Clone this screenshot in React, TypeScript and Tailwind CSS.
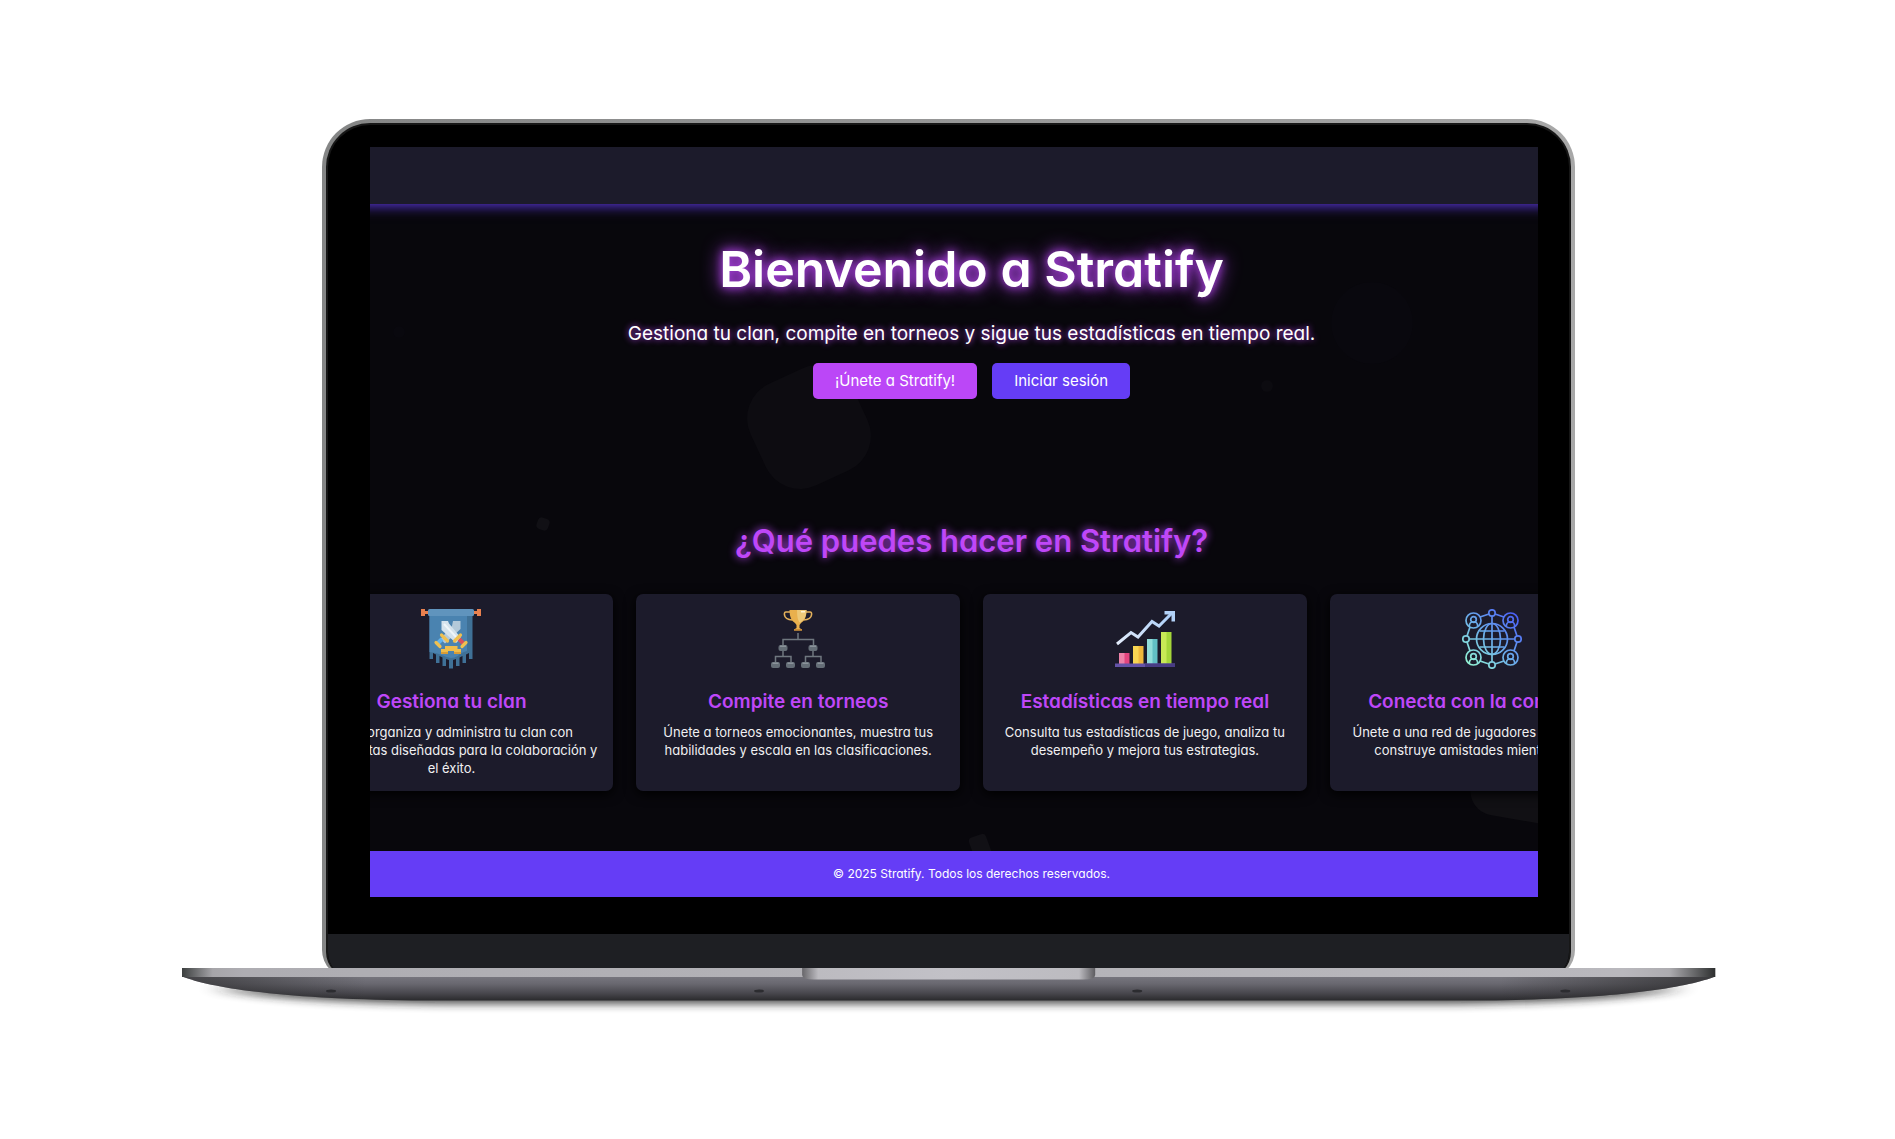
import type { ReactNode } from "react";

function BannerIcon() {
  return (
    <svg viewBox="0 0 60 60" className="size-[60px]" aria-hidden="true">
      <path d="M0 0h4v2h3v3H4v2H0zM60 0h-4v2h-3v3h3v2h4z" fill="#e8804e" />
      <path d="M8.500 6h43v44h-3.500v-6l-3 1.500v8.500h-3.500v-7l-3 1.500v8.500H35v-7l-3 1v8.500h-4V51l-3-1v7h-3.500v-8.500l-3-1.500v7H15v-8.500L12 44v6H8.500z" fill="#3f7197" />
      <path d="M8.500 6H46v36q-7 2-9 5-4 2-7 2-5-1-8-2.500-6-3-13.500-3.500z" fill="#4a83b0" />
      <rect x="7" y="0" width="46" height="7" rx="1.500" fill="#6094bd" />
      <path d="M39.500 12v8L24 34.500 19.500 30 31 17l1-5z" fill="#b3c9d9" />
      <path d="M20.500 12v9L35 34l5-5-12-14.500-1-2.500z" fill="#d5e3ed" />
      <path d="m23 15 13 14" stroke="#eff6fa" strokeWidth="2" />
      <path d="m21 30-5 5" stroke="#62b4ee" strokeWidth="4" />
      <path d="m38 30 5 5" stroke="#d9505c" strokeWidth="4" />
      <path d="m20.500 26 6 6M15 33.500l4 4M39.500 26l-6 6M45 33.500l-4 4" stroke="#efc050" strokeWidth="3.200" strokeLinecap="round" />
      <path d="M24 37h12.500v3H40v5h-7v-3h-6v3h-7v-5h4z" fill="#efbd4b" />
      <path d="M20 43h7v2h-7zM33 43h7v2h-7z" fill="#d89c36" />
    </svg>
  );
}

function TournamentIcon() {
  return (
    <svg viewBox="0 0 60 60" className="size-[60px]" aria-hidden="true">
      <path d="M22 3h-4q-2 0-1.500 3 .5 4.500 8 5M38 3h4q2 0 1.500 3-.5 4.500-8 5" fill="none" stroke="#e4b25c" strokeWidth="1.600" />
      <path d="M21.500 1h17q0 10-5.500 13l-1.500 2v3l2.500 1.500v1h-8v-1l2.500-1.500v-3L27 14q-5.500-3-5.500-13z" fill="#e9b04d" />
      <path d="M29 1h9.500q0 9-6 12.500Q29 13 29 1z" fill="#edc878" />
      <path d="M33 2h4v1.500h-4z" fill="#fff3d2" />
      <path d="M26 20h8v1.500h-8z" fill="#c98a35" />
      <path d="M30 24v6M15 37v-6.500h30.500V37M15 42v5M7.500 53v-5.500h15.500V53M45 42v5M37.500 53v-5.500h15.500V53" fill="none" stroke="#6f777f" strokeWidth="1.500" />
      <g fill="#656e77">
        <rect x="10.500" y="36" width="9" height="6" rx="2" />
        <rect x="40.500" y="36" width="9" height="6" rx="2" />
        <rect x="3" y="53" width="9" height="6" rx="2" />
        <rect x="18" y="53" width="9" height="6" rx="2" />
        <rect x="33" y="53" width="9" height="6" rx="2" />
        <rect x="48" y="53" width="9" height="6" rx="2" />
      </g>
      <path d="M12 37.200h6M42 37.200h6M4.500 54.200h6M19.500 54.200h6M34.500 54.200h6M49.500 54.200h6" stroke="#8a929a" strokeWidth="1.400" />
    </svg>
  );
}

function ChartIcon() {
  return (
    <svg viewBox="0 0 60 60" className="size-[60px]" aria-hidden="true">
      <defs>
        <linearGradient id="trend" x1="0" y1="1" x2="1" y2="0">
          <stop offset="0" stopColor="#e3ecfb" />
          <stop offset="1" stopColor="#a9cdf8" />
        </linearGradient>
      </defs>
      <path d="M4 44h6v11H4z" fill="#ee82a9" />
      <path d="M9.500 44h5v11h-5z" fill="#e4457f" />
      <path d="M18 37h6v18h-6z" fill="#f8d552" />
      <path d="M23.500 37h5v18h-5z" fill="#f0b83c" />
      <path d="M32 30h6v25h-6z" fill="#92ddda" />
      <path d="M37.500 30h5v25h-5z" fill="#62bfc5" />
      <path d="M46 23h6v32h-6z" fill="#c8e956" />
      <path d="M51.500 23h5v32h-5z" fill="#a5d63a" />
      <path d="M0 54.500h60V58H0z" fill="#6453a8" />
      <path d="M30 54.500h30V58H30z" fill="#483c84" />
      <path d="m2 35 14-11.500 7 4.500 14-15.500 7 4.500L57 4" fill="none" stroke="url(#trend)" strokeWidth="3" />
      <path d="M49.500 2H60v10.500h-3.500V5.500h-7z" fill="#b3d2f8" />
    </svg>
  );
}

function CommunityIcon() {
  return (
    <svg viewBox="0 0 60 60" className="size-[60px]" aria-hidden="true">
      <defs>
        <linearGradient id="net" gradientUnits="userSpaceOnUse" x1="6" y1="54" x2="54" y2="6">
          <stop offset="0" stopColor="#92f2d4" />
          <stop offset="0.500" stopColor="#69a9ea" />
          <stop offset="1" stopColor="#4a5ff6" />
        </linearGradient>
      </defs>
      <g fill="none" stroke="url(#net)" strokeWidth="1.700">
        <circle cx="30" cy="30" r="15.500" />
        <ellipse cx="30" cy="30" rx="8.500" ry="15.500" />
        <path d="M30 7v46M7 30h46M17.500 22h25M17.500 38h25" />
        <circle cx="30" cy="4" r="3.200" />
        <circle cx="30" cy="56" r="3.200" />
        <circle cx="4" cy="30" r="3.200" />
        <circle cx="56" cy="30" r="3.200" />
        <path d="m18 8 9-3M33 5l9 3M18 52l9 3M33 55l9-3M8 18l-3 9M5 33l3 9M52 18l3 9M55 33l-3 9" />
        {[11.5, 48.5].map((x) =>
          [11.5, 48.5].map((y) => (
            <g key={`${x}-${y}`}>
              <circle cx={x} cy={y} r="7.500" />
              <circle cx={x} cy={y - 1} r="2.800" />
              <path d={`M${x - 4.2} ${y + 6}q0-4 3-4.500h2.400q3 .5 3 4.500`} />
            </g>
          )),
        )}
      </g>
    </svg>
  );
}

const features: { title: string; text: string; icon: ReactNode }[] = [
  {
    title: "Gestiona tu clan",
    text: "Crea, organiza y administra tu clan con herramientas diseñadas para la colaboración y el éxito.",
    icon: <BannerIcon />,
  },
  {
    title: "Compite en torneos",
    text: "Únete a torneos emocionantes, muestra tus habilidades y escala en las clasificaciones.",
    icon: <TournamentIcon />,
  },
  {
    title: "Estadísticas en tiempo real",
    text: "Consulta tus estadísticas de juego, analiza tu desempeño y mejora tus estrategias.",
    icon: <ChartIcon />,
  },
  {
    title: "Conecta con la comunidad",
    text: "Únete a una red de jugadores apasionados y construye amistades mientras juegas.",
    icon: <CommunityIcon />,
  },
];

function FloatingShapes() {
  return (
    <div className="pointer-events-none absolute inset-0" aria-hidden="true">
      <div className="absolute top-[224px] left-[32.800%] size-28 -rotate-25 rounded-[38px] bg-[#0d0c11]" />
      <div className="absolute top-[135px] left-[82.300%] size-[82px] rounded-full bg-[#09080e]" />
      <div className="absolute top-[233px] left-[76.300%] size-3 rounded-full bg-[#0c0b10]" />
      <div className="absolute top-[371px] left-[14.300%] size-3 rotate-20 rounded bg-[#111015]" />
      <div className="absolute top-[179px] left-[2%] size-3 rounded-full bg-[#09080e]" />
      <div className="absolute top-[546px] left-[94.800%] size-[130px] rotate-10 rounded-3xl bg-[#111014]" />
      <div className="absolute top-[688px] left-[51.500%] h-7 w-[18px] -rotate-20 rounded-sm bg-[#111015]" />
    </div>
  );
}

function Website() {
  return (
    <div className="relative overflow-hidden bg-[#08070c] text-center text-white">
      <FloatingShapes />
      <header className="relative -mx-5 h-[57px] bg-[#1c1b2b] shadow-[0_2px_12px_#5a38d8]" />
      <div className="relative ml-[-8.500%] w-[120%]">
        <main className="px-[19px] pt-[35px] pb-[60px]">
          <section className="flex flex-col items-center">
            <h1 className="text-[50px] leading-[60px] font-semibold [text-shadow:0_0_10px_#bb47f7,0_0_20px_#bb47f7]">
              Bienvenido a Stratify
            </h1>
            <p className="mt-[21px] text-[19px] leading-7 [text-shadow:0_0_6px_#bb47f7]">
              Gestiona tu clan, compite en torneos y sigue tus estadísticas en tiempo real.
            </p>
            <div className="mt-[15px] flex gap-[15px]">
              <button className="h-9 rounded-[5px] bg-[#bb47f7] px-[22px] text-[15px]">¡Únete a Stratify!</button>
              <button className="h-9 rounded-[5px] bg-[#653df6] px-[22px] text-[15px]">Iniciar sesión</button>
            </div>
          </section>
          <section className="mt-[122px]">
            <h2 className="text-[31px] leading-10 font-semibold text-[#bf47f8] [text-shadow:0_0_8px_#bb47f7]">
              ¿Qué puedes hacer en Stratify?
            </h2>
            <div className="mt-[33px] grid grid-cols-4 gap-[23px]">
              {features.map((feature) => (
                <article
                  key={feature.title}
                  className="flex flex-col items-center rounded-[7px] bg-[#1c1b2b] px-3 pt-[15px] pb-3.5 shadow-[0_3px_12px_#000000]"
                >
                  {feature.icon}
                  <h3 className="mt-5 text-[19px] leading-[26px] font-semibold whitespace-nowrap text-[#bf47f8]">
                    {feature.title}
                  </h3>
                  <p className="mt-2 text-[13px] leading-[18px] text-[#f0f0f2]">{feature.text}</p>
                </article>
              ))}
            </div>
          </section>
        </main>
        <footer className="bg-[#653df6] py-3.5 text-[12px] leading-[18px]">
          © 2025 Stratify. Todos los derechos reservados.
        </footer>
      </div>
    </div>
  );
}

function LaptopBase() {
  return (
    <svg
      viewBox="0 0 1533 50"
      preserveAspectRatio="none"
      className="relative -mt-2.5 h-[50px] w-[81%] overflow-visible"
      aria-hidden="true"
    >
      <defs>
        <linearGradient id="underside" x1="0" y1="0" x2="0" y2="1">
          <stop offset="0" stopColor="#77767e" />
          <stop offset="0.300" stopColor="#696870" />
          <stop offset="0.700" stopColor="#48474d" />
          <stop offset="1" stopColor="#2a2a2d" />
        </linearGradient>
        <linearGradient id="ends">
          <stop offset="0" stopColor="#222" stopOpacity="0.600" />
          <stop offset="0.120" stopColor="#222" stopOpacity="0" />
          <stop offset="0.860" stopColor="#222" stopOpacity="0" />
          <stop offset="1" stopColor="#222" stopOpacity="0.700" />
        </linearGradient>
        <linearGradient id="edge">
          <stop offset="0" stopColor="#3c3f3f" />
          <stop offset="0.020" stopColor="#a6a5a9" />
          <stop offset="0.040" stopColor="#aeadb2" />
          <stop offset="0.940" stopColor="#b9b8bd" />
          <stop offset="0.970" stopColor="#adacb0" />
          <stop offset="1" stopColor="#2d2f2f" />
        </linearGradient>
        <linearGradient id="notch">
          <stop offset="0" stopColor="#67666a" />
          <stop offset="0.055" stopColor="#bcbbc0" />
          <stop offset="0.500" stopColor="#c2c1c7" />
          <stop offset="0.945" stopColor="#bcbbc0" />
          <stop offset="1" stopColor="#5d5c60" />
        </linearGradient>
        <filter id="soft" x="-5%" y="-100%" width="110%" height="300%">
          <feGaussianBlur stdDeviation="10 4" />
        </filter>
      </defs>
      <path d="M30 20h1473q-70 14-230 16H260Q100 34 30 20z" fill="#222" opacity="0.800" filter="url(#soft)" />
      <path d="M0 8.500h1533C1503 20 1433 31 1303 32.500H230C100 31 30 20 0 8.500z" fill="url(#underside)" />
      <path d="M0 8.500h1533C1503 20 1433 31 1303 32.500H230C100 31 30 20 0 8.500z" fill="url(#ends)" />
      <path d="M0 0h1533v9H0z" fill="url(#edge)" />
      <path d="M620 0h293v7q0 4.500-12 4.500H632q-12 0-12-4.500z" fill="url(#notch)" />
      <g fill="#2c2c30">
        <ellipse cx="149" cy="23" rx="5" ry="1.500" />
        <ellipse cx="577" cy="23" rx="5" ry="1.500" />
        <ellipse cx="955" cy="23" rx="5" ry="1.500" />
        <ellipse cx="1383" cy="23" rx="5" ry="1.500" />
      </g>
    </svg>
  );
}

export default function App() {
  return (
    <div className="flex min-h-screen flex-col items-center bg-white pt-[119px] pl-[2px] font-['Inter',sans-serif] [font-feature-settings:'cv11']">
      <div className="w-[66.200%] rounded-t-[48px] rounded-b-[28px] bg-linear-to-r from-[#858686] to-[#a8a8a8] px-1 pt-1">
        <div className="overflow-hidden rounded-t-[44px] rounded-b-[26px] border-2 border-b-0 border-[#171717] bg-black">
          <div className="pt-[22px] pr-[31px] pb-[37px] pl-[42px]">
            <Website />
          </div>
          <div className="h-11 bg-[#1e1f23]" />
        </div>
      </div>
      <LaptopBase />
    </div>
  );
}
